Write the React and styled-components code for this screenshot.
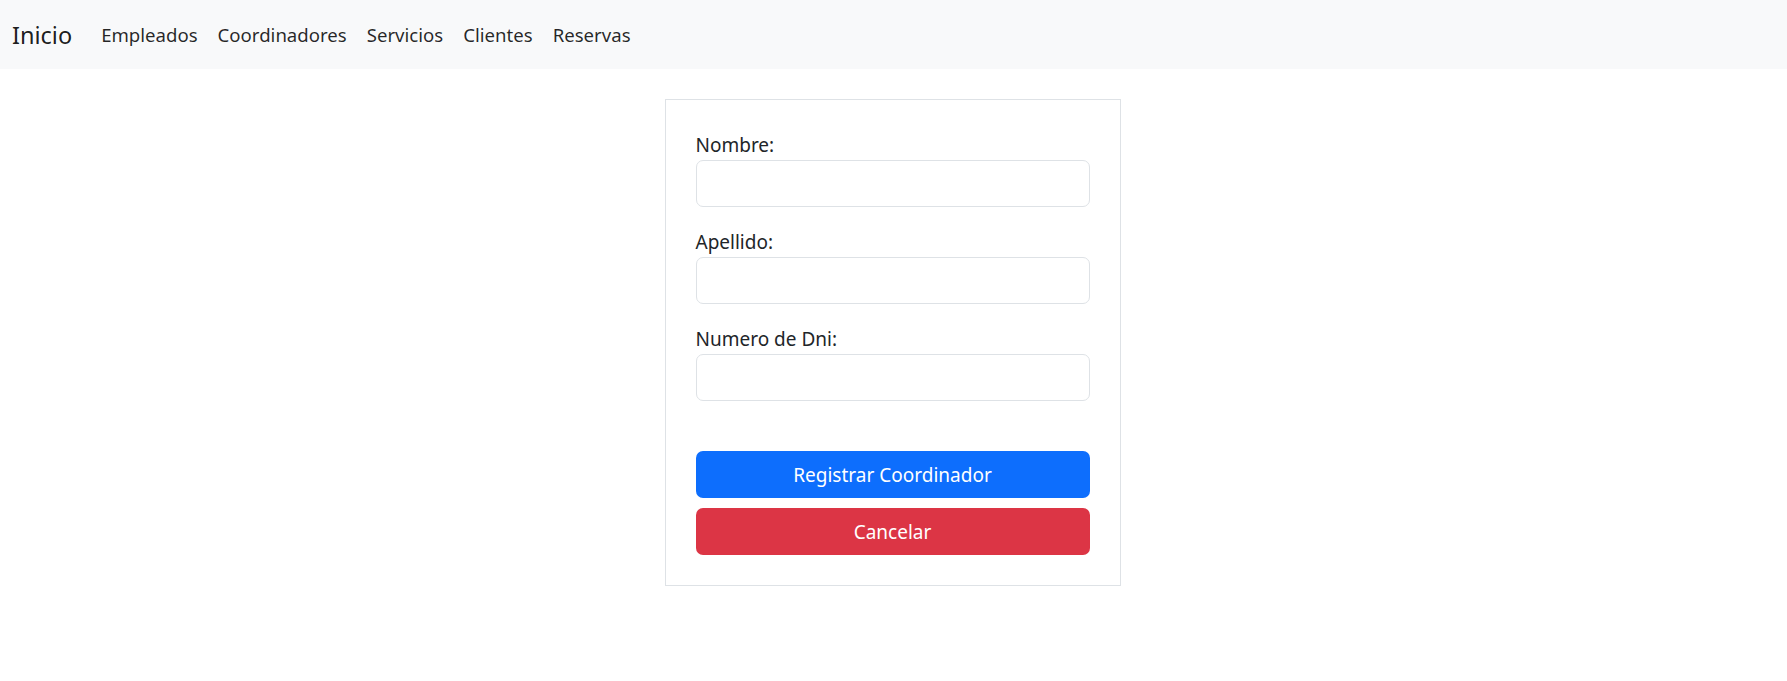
import styled, { createGlobalStyle } from 'styled-components'

const GlobalStyle = createGlobalStyle`
    body {
        margin: 0;
        font-family: "Noto Sans", "Open Sans", sans-serif;
        color: #212529;
        background: #fff;
    }
    * {
        box-sizing: border-box;
    }
`

const NavBar = styled.nav`
    display: flex;
    align-items: center;
    height: 69px;
    padding: 0 15px 0 12px;
    background: #f8f9fa;
`

const Brand = styled.a`
    font-size: 23.5px;
    color: rgba(0, 0, 0, 0.9);
    margin-right: 19px;
    text-decoration: none;
`

const NavLinks = styled.div`
    display: flex;
`

const NavLink = styled.a`
    font-size: 18.6px;
    padding: 10px;
    color: rgba(0, 0, 0, 0.85);
    text-decoration: none;
`

const Main = styled.main`
    display: flex;
    justify-content: center;
    padding-top: 30px;
    padding-right: 2px;
`

const Card = styled.form`
    width: 456px;
    padding: 30px;
    border: 1px solid #dee2e6;
    display: flex;
    flex-direction: column;
`

const Field = styled.div`
    display: flex;
    flex-direction: column;
    margin-bottom: 20px;
`

const Label = styled.label`
    font-size: 19px;
    line-height: 30px;
    color: #212529;
`

const Input = styled.input`
    height: 47px;
    border: 1px solid #dee2e6;
    border-radius: 7px;
    padding: 7px 15px;
    font-size: 20px;
    font-family: inherit;
`

const Actions = styled.div`
    display: flex;
    flex-direction: column;
    gap: 10px;
    margin-top: 30px;
`

const Button = styled.button`
    height: 47px;
    border: none;
    border-radius: 7px;
    font-size: 19px;
    font-family: inherit;
    color: #fff;
    background: ${props => props.variant === 'danger' ? '#dc3545' : '#0d6efd'};
    cursor: pointer;
`

const fields = ['Nombre:', 'Apellido:', 'Numero de Dni:']
const links = ['Empleados', 'Coordinadores', 'Servicios', 'Clientes', 'Reservas']

function App() {
    return (
        <>
            <GlobalStyle />
            <NavBar>
                <Brand href="#">Inicio</Brand>
                <NavLinks>
                    {links.map(l => <NavLink key={l} href="#">{l}</NavLink>)}
                </NavLinks>
            </NavBar>
            <Main>
                <Card onSubmit={e => e.preventDefault()}>
                    {fields.map(f => (
                        <Field key={f}>
                            <Label>{f}</Label>
                            <Input type="text" />
                        </Field>
                    ))}
                    <Actions>
                        <Button type="submit">Registrar Coordinador</Button>
                        <Button type="button" variant="danger">Cancelar</Button>
                    </Actions>
                </Card>
            </Main>
        </>
    )
}

export default App
